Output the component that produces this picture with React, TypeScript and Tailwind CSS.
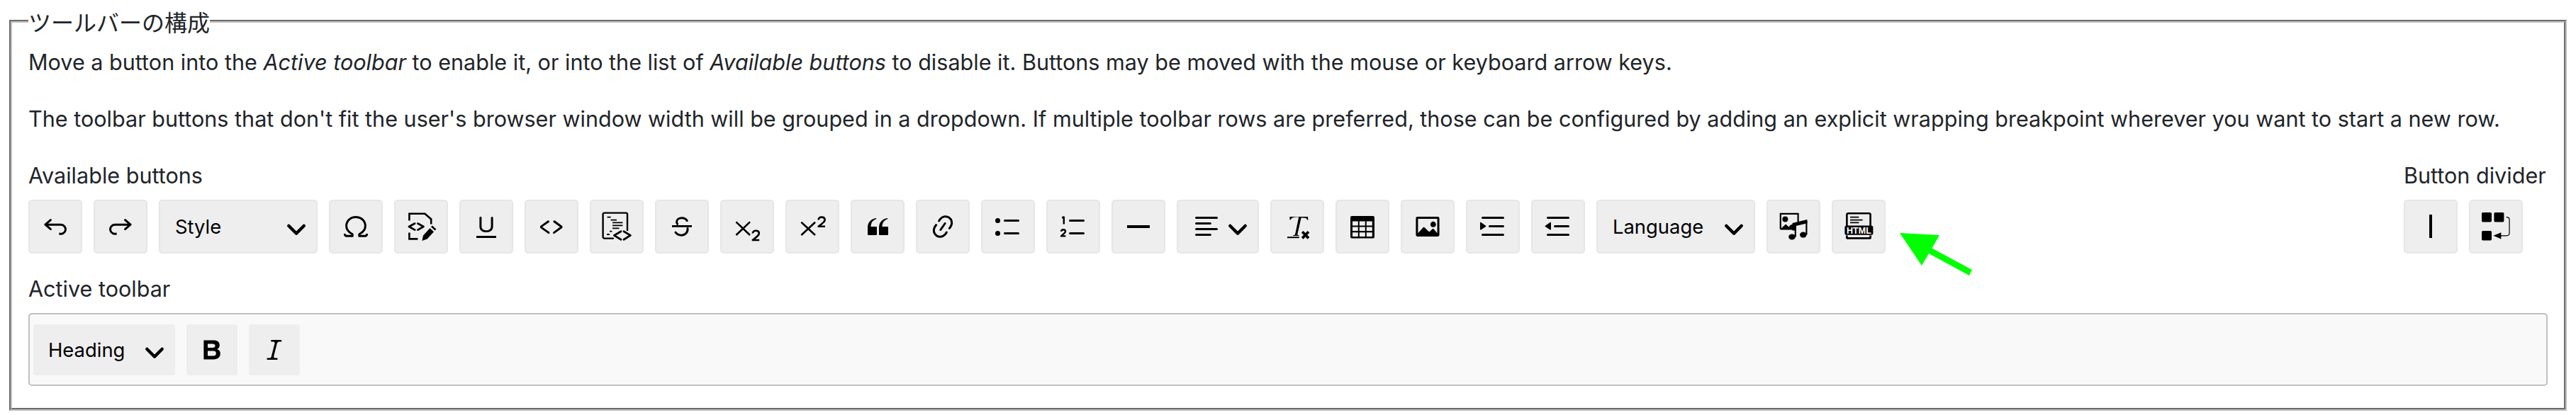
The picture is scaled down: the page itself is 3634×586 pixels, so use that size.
import React from "react";

const I = ({ children }: { children: React.ReactNode }) => (
  <svg viewBox="0 0 20 20" className="w-10 h-10 shrink-0 overflow-visible text-black" fill="currentColor">
    {children}
  </svg>
);

const S = { fill: "none", stroke: "currentColor", strokeLinecap: "round", strokeLinejoin: "round" } as const;

const Chevron = () => (
  <svg viewBox="0 0 10 10" className="w-[30px] h-[30px] shrink-0 mt-1" fill="currentColor">
    <path d="M.941 4.523a.75.75 0 1 1 1.06-1.06l3.006 3.005 3.005-3.005a.75.75 0 1 1 1.06 1.06l-3.549 3.55a.75.75 0 0 1-1.168-.136L.941 4.523z" />
  </svg>
);

const Btn = ({ children }: { children: React.ReactNode }) => (
  <div className="w-[76px] h-[76px] shrink-0 flex items-center justify-center bg-[#eeeeee] border-2 border-[#e6e6e6] rounded-[5px]">
    {children}
  </div>
);

const Drop = ({ label }: { label: string }) => (
  <div className="w-[224px] h-[76px] shrink-0 flex items-center justify-between pl-[21px] pr-[13px] bg-[#eeeeee] border-2 border-[#e6e6e6] rounded-[5px] text-[27.4px] text-black">
    <span>{label}</span>
    <Chevron />
  </div>
);

const Undo = () => <I><path d="m5.042 9.367 2.189 1.837a.75.75 0 0 1-.965 1.149l-3.788-3.18a.747.747 0 0 1-.21-.284.75.75 0 0 1 .17-.945L6.23 4.762a.75.75 0 1 1 .964 1.15L4.863 7.866h8.917A.75.75 0 0 1 14 7.9a4 4 0 1 1-1.477 7.718l.344-1.489a2.5 2.5 0 1 0 1.094-4.73l.008-.032H5.042z" /></I>;
const Redo = () => <I><path d="m14.958 9.367-2.189 1.837a.75.75 0 0 0 .965 1.149l3.788-3.18a.747.747 0 0 0 .21-.284.75.75 0 0 0-.17-.945L13.77 4.762a.75.75 0 1 0-.964 1.15l2.331 1.955H6.22A.75.75 0 0 0 6 7.9a4 4 0 1 0 1.477 7.718l-.344-1.489A2.5 2.5 0 1 1 6.039 9.4l-.008-.032h8.927z" /></I>;
const Omega = () => <I><path {...S} strokeWidth={1.5} d="M2.2 15.6c.3 1 1 1 1.6 1H7.6v-1.2C5 14 3.300 12 3.300 9.500 3.300 5.800 6.200 3.300 10 3.300s6.700 2.500 6.700 6.200c0 2.500-1.700 4.500-4.300 5.900v1.200h3.800c.6 0 1.300 0 1.600-1" /></I>;
const SourceEdit = () => (
  <I>
    <path {...S} strokeWidth={1.3} strokeLinecap="butt" strokeLinejoin="miter" d="M1.700 5.800V.9h11l4.400 3.800v3.600M1.700 14.200v4.500h6" />
    <path {...S} strokeWidth={1.4} d="M5.600 7.800 1.500 10l4.100 2.300M7.700 7.800l4 2.200-4 2.300" />
    <path d="m11.500 16.200 4.700-5.100 2.800 2.500-4.700 5.200-3.600 1.200zM17 10.300l.9-1 2.800 2.500-.9 1z" />
  </I>
);
const Underline = () => <I><path d="M3 18v-1.500h14V18zM5.200 10V3.600c0-.4.4-.6.8-.6.300 0 .7.200.7.600v6.200c0 2 1.300 2.800 3.200 2.800 1.900 0 3.400-.9 3.400-2.900V3.600c0-.3.400-.5.800-.5.300 0 .7.200.7.500V10c0 2.700-2.200 4-4.900 4-2.600 0-4.700-1.200-4.700-4z" /></I>;
const Code = () => <I><path d="m12.500 5.700 5.200 3.900v1.300l-5.600 4c-.1.200-.3.200-.5.200-.3-.1-.6-.7-.6-1l.3-.4 4.700-3.500L11.500 7l-.2-.2c-.1-.3-.1-.6 0-.8.200-.2.500-.4.800-.4a.8.8 0 0 1 .4.100zm-5.200 0L2 9.600v1.300l5.600 4c.1.200.3.200.5.200.3-.1.700-.7.600-1 0-.1 0-.3-.2-.4l-5-3.500L8.200 7l.2-.2c.1-.3.100-.6 0-.8-.2-.2-.5-.4-.8-.4a.8.8 0 0 0-.3.100z" /></I>;
const CodeBlock = () => (
  <I>
    <path {...S} strokeWidth={1.2} d="M7.500 18.300H1.300a1 1 0 0 1-1-1V1.300a1 1 0 0 1 1-1h15.200a1 1 0 0 1 1 1V12.500" />
    <path {...S} strokeWidth={0.9} strokeLinecap="butt" d="M3.300 3.300h2.500M5.800 5.300H10M7 7.200h7.200M7 9.200h7.200M7 11.200h4.700M5 13.300h1.700M3 15.500h2" />
    <path {...S} strokeWidth={1.4} d="M13 13.400 8.200 16.200 13 19.100M15 13.400l4.700 2.800L15 19.100" />
  </I>
);
const Strike = () => (
  <I>
    <path d="M3 9h14v1.400H3z" />
    <path {...S} strokeWidth={1.5} d="M13.600 5.800C12.800 4.500 11.500 3.900 10 3.900c-2 0-3.700 1-3.700 2.700 0 .7.200 1.200.5 1.600M14 11.300c.3 3-2 4.800-4.300 4.800-1.800 0-3.200-.7-4.200-2" />
  </I>
);
const Two = ({ x, y }: { x: number; y: number }) => (
  <path {...S} strokeWidth={1.3} strokeLinecap="butt" transform={`translate(${x} ${y})`} d="M.3 2C.3.8 1.300.1 2.500.1 3.800.1 4.800.8 4.800 2c0 1.300-1.500 2.400-4.500 4.700h4.700" />
);
const Sub = () => <I><path {...S} strokeWidth={1.3} strokeLinecap="butt" d="M2.200 6.700 12 16M12 6.700 2.200 16" /><Two x={13.600} y={12.800} /></I>;
const Sup = () => <I><path {...S} strokeWidth={1.3} strokeLinecap="butt" d="M2.200 6.900 12 16M12 6.900 2.200 16" /><Two x={14} y={3.200} /></I>;
const Quote = () => <I><path d="M3 10.423a6.500 6.500 0 0 1 6.056-6.408l.038.67C6.448 5.423 5.354 7.663 5.220 10H9c.552 0 .5.432.5.986v4.511c0 .554-.448.503-1 .503h-5c-.552 0-.5-.449-.5-1.003v-4.574zm8 0a6.500 6.500 0 0 1 6.056-6.408l.038.67c-2.646.739-3.740 2.979-3.873 5.315H17c.552 0 .5.432.5.986v4.511c0 .554-.448.503-1 .503h-5c-.552 0-.5-.449-.5-1.003v-4.574z" /></I>;
const Link = () => <I><path d="m11.077 15 .991-1.416a.75.75 0 1 1 1.229.86l-1.148 1.640a.748.748 0 0 1-.217.206 5.251 5.251 0 0 1-8.503-5.955.741.741 0 0 1 .12-.274l1.147-1.639a.75.75 0 1 1 1.228.86L4.933 10.700l.006.003a3.750 3.750 0 0 0 6.132 4.294l.006.004zm5.494-5.335a.748.748 0 0 1-.12.274l-1.147 1.639a.75.75 0 1 1-1.228-.86l.86-1.230a3.750 3.750 0 0 0-6.144-4.301l-.86 1.229a.75.75 0 0 1-1.229-.86l1.148-1.640a.748.748 0 0 1 .217-.206 5.251 5.251 0 0 1 8.503 5.955zm-4.563-2.532a.75.75 0 0 1 .184 1.045l-3.155 4.505a.75.75 0 1 1-1.229-.86l3.155-4.506a.75.75 0 0 1 1.045-.184z" /></I>;
const Bullets = () => <I><path d="M7 5.750c0 .414.336.75.75.75h9.500a.75.75 0 1 0 0-1.500h-9.500a.75.75 0 0 0-.75.750zm0 9c0 .414.336.75.75.75h9.500a.75.75 0 1 0 0-1.500h-9.500a.75.75 0 0 0-.75.750z" /><circle cx={2.750} cy={5.750} r={1.750} /><circle cx={2.750} cy={14.750} r={1.750} /></I>;
const Numbers = () => (
  <I>
    <path d="M7 5.750c0 .414.336.75.75.75h9.500a.75.75 0 1 0 0-1.500h-9.500a.75.75 0 0 0-.75.750zm0 9c0 .414.336.75.75.75h9.500a.75.75 0 1 0 0-1.500h-9.500a.75.75 0 0 0-.75.750z" />
    <path {...S} strokeWidth={1.2} strokeLinecap="butt" d="M2.100 3.800 3.400 3.200v5.100M1.500 13.400c.1-.9.700-1.300 1.500-1.300s1.500.4 1.500 1.300c0 1-1.500 1.800-3 3.300h3.200" />
  </I>
);
const Hr = () => <I><path d="M2 9h16v2H2z" /></I>;
const Align = () => <I><path d="M2 3.750c0 .414.336.75.75.75h14.500a.75.75 0 1 0 0-1.500H2.750a.75.75 0 0 0-.75.750zm0 8c0 .414.336.75.75.75h14.500a.75.75 0 1 0 0-1.500H2.750a.75.75 0 0 0-.75.750zm0 4c0 .414.336.75.75.75h9.929a.75.75 0 1 0 0-1.500H2.750a.75.75 0 0 0-.75.750zm0-8c0 .414.336.75.75.75h9.929a.75.75 0 1 0 0-1.500H2.750a.75.75 0 0 0-.75.750z" /></I>;
const Clear = () => (
  <I>
    <path d="M4.700 3h12.800l.2 2.300-.5.100c-.5-1.200-1.200-1.600-2.800-1.600h-1.600l-2.600 11.400c-.1.600.2.800 1 .8v.5H7.100v-.5c1 0 1.300-.2 1.500-.9l2.500-11.800H9.400c-2 0-3.300.5-4.200 1.900l-.5-.1z" />
    <path d="M3 17.100h8.400v1H3z" />
    <path {...S} strokeWidth={1.900} strokeLinecap="butt" d="m13.600 13.600 4.400 4.600M18 13.600l-4.400 4.600" />
  </I>
);
const Table = () => <I><path fillRule="evenodd" d="M2.500 2.500h15a1 1 0 0 1 1 1v13.800a1 1 0 0 1-1 1h-15a1 1 0 0 1-1-1V3.500a1 1 0 0 1 1-1zM3 6.300v2.900h3.900V6.300zm4.900 0v2.900h4V6.300zm5 0v2.900h4V6.300zM3 10.300V13h3.900v-2.700zm4.900 0V13h4v-2.700zm5 0V13h4v-2.700zM3 14.100v2.900h3.900v-2.900zm4.900 0v2.900h4v-2.900zm5 0v2.900h4v-2.900z" /></I>;
const Picture = () => <I><path d="M6.910 10.540c.26-.23.64-.21.88.03l3.360 3.140 2.230-2.060a.64.64 0 0 1 .87 0l2.520 2.970V4.500H3.200v10.120l3.710-4.080zm10.270-7.510c.6 0 1.090.47 1.090 1.050v11.840c0 .59-.49 1.060-1.090 1.060H2.790c-.6 0-1.090-.47-1.090-1.060V4.080c0-.58.49-1.050 1.100-1.050h14.380zm-5.220 5.560a1.960 1.960 0 1 1 3.900-.01 1.960 1.960 0 0 1-3.900.01z" /></I>;
const Indent = () => <I><path d="M2 3.750c0 .414.336.75.75.75h14.500a.75.75 0 1 0 0-1.500H2.750a.75.75 0 0 0-.75.750zm5 6c0 .414.336.75.75.75h9.500a.75.75 0 1 0 0-1.500h-9.500a.75.75 0 0 0-.75.750zM2.750 16.500h14.500a.75.75 0 1 0 0-1.500H2.750a.75.75 0 1 0 0 1.500zM1.632 6.950 5.020 9.358a.4.4 0 0 1-.013.661l-3.390 2.207A.4.4 0 0 1 1 11.892V7.275a.4.4 0 0 1 .632-.326z" /></I>;
const Outdent = () => <I><path d="M2 3.750c0 .414.336.75.75.75h14.500a.75.75 0 1 0 0-1.500H2.750a.75.75 0 0 0-.75.750zm5 6c0 .414.336.75.75.75h9.500a.75.75 0 1 0 0-1.500h-9.500a.75.75 0 0 0-.75.750zM2.750 16.500h14.500a.75.75 0 1 0 0-1.500H2.750a.75.75 0 1 0 0 1.500zM4.368 6.950.980 9.358a.4.4 0 0 0 .013.661l3.390 2.207A.4.4 0 0 0 5 11.892V7.275a.4.4 0 0 0-.632-.326z" /></I>;
const Media = () => (
  <I>
    <path {...S} strokeWidth={1.100} strokeLinecap="butt" strokeLinejoin="miter" d="M.9 11.800V.9h12.400v6" />
    <path d="M.6 12.300h8.900l.7-4.300-2.500 1-1 1.300L4.600 8.200 1.200 11.400z" />
    <circle cx={4.200} cy={4.700} r={2} />
    <path d="M9.300 7.500 19.700 5v2.600L11.900 9.500v3.200H9.300z" />
    <path {...S} strokeWidth={1.100} strokeLinecap="butt" d="M11.400 8.500v8.700M19.200 6v9.800" />
    <ellipse cx={9} cy={17.200} rx={2.400} ry={2} />
    <ellipse cx={16.900} cy={15.800} rx={2.400} ry={2} />
  </I>
);
const Html = () => (
  <I>
    <path {...S} strokeWidth={1.300} strokeLinecap="butt" d="M1.700 9.600V1.600a1 1 0 0 1 1-1h14.600a1 1 0 0 1 1 1v8" />
    <path {...S} strokeWidth={1.400} strokeLinecap="butt" d="M1.700 16.200v1.400a.6.6 0 0 0 .6.6h15.400a.6.6 0 0 0 .6-.6v-1.400" />
    <path {...S} strokeWidth={0.9} strokeLinecap="butt" d="M4 3.300h6.200M4 5.300h8.800M4 7.200h6.200" />
    <rect x={0.2} y={9.200} width={20} height={6.700} rx={1.300} />
    <text x={10.200} y={15} textAnchor="middle" fill="#ffffff" fontSize={6.800} fontWeight={700} textLength={17.400} lengthAdjust="spacingAndGlyphs" fontFamily="'Liberation Sans', sans-serif">HTML</text>
  </I>
);
const Bar = () => <I><path d="M9 1.500h2v16.500H9z" /></I>;
const PageBreak = () => (
  <I>
    <rect x={0} y={0} width={7} height={6.700} rx={0.8} />
    <rect x={8.700} y={0} width={7} height={6.700} rx={0.8} />
    <rect x={0} y={13} width={7} height={6.700} rx={0.8} />
    <path {...S} strokeWidth={0.6} d="M17.500 3.300c1.300 0 2 .7 2 1.800v9.400c0 1.100-.7 1.900-2 1.900h-5" />
    <path d="m8.200 16.400 5.500-2.300v4.600z" />
  </I>
);
const Bold = () => <I><path fillRule="evenodd" d="M4.200 3.300h6.900c2.800 0 4.300 1.300 4.300 3.400 0 1.300-.7 2.300-1.800 2.800 1.500.4 2.300 1.600 2.300 3.100 0 2.500-1.800 4.100-4.700 4.100h-7zM7 5.700v2.800h3.400c1.200 0 1.900-.5 1.900-1.400s-.7-1.400-1.900-1.400zm0 5.100v3.500h3.900c1.300 0 2-.6 2-1.800s-.7-1.700-2-1.700z" /></I>;
const Italic = () => <I><path d="m9.586 14.633.021.004c-.036.335.095.655.393.962.082.083.173.15.274.201h1.474a.6.6 0 1 1 0 1.200H5.304a.6.6 0 0 1 0-1.200h1.150c.474-.07.809-.182 1.005-.334.157-.122.291-.32.404-.597l2.416-9.550a1.053 1.053 0 0 0-.281-.823 1.120 1.120 0 0 0-.442-.296H8.150a.6.6 0 0 1 0-1.200h6.443a.6.6 0 1 1 0 1.200h-1.195c-.376.056-.65.155-.823.296-.215.175-.423.439-.623.79l-2.366 9.347z" /></I>;

export default function App() {
  return (
    <div className="relative bg-white h-[586px] font-['Inter','Liberation_Sans','Noto_Sans_CJK_JP',sans-serif] text-[30.57px] leading-[48px] text-[#212529]">
      <fieldset className="mx-[13px] pt-[10px] px-[23px] pb-[31px] border-4 [border-style:groove] border-[#c0c0c0] relative top-[6px]">
        <legend className="text-[32px] leading-[48px] font-['Noto_Sans_CJK_JP','Inter',sans-serif]">ツールバーの構成</legend>
        <p>Move a button into the <em>Active toolbar</em> to enable it, or into the list of <em>Available buttons</em> to disable it. Buttons may be moved with the mouse or keyboard arrow keys.</p>
        <p className="mt-8">The toolbar buttons that don't fit the user's browser window width will be grouped in a dropdown. If multiple toolbar rows are preferred, those can be configured by adding an explicit wrapping breakpoint wherever you want to start a new row.</p>
        <div className="mt-8 flex justify-between">
          <div>
            <div className="mb-[10px]">Available buttons</div>
            <div className="flex gap-4">
              <Btn><Undo /></Btn>
              <Btn><Redo /></Btn>
              <Drop label="Style" />
              <Btn><Omega /></Btn>
              <Btn><SourceEdit /></Btn>
              <Btn><Underline /></Btn>
              <Btn><Code /></Btn>
              <Btn><CodeBlock /></Btn>
              <Btn><Strike /></Btn>
              <Btn><Sub /></Btn>
              <Btn><Sup /></Btn>
              <Btn><Quote /></Btn>
              <Btn><Link /></Btn>
              <Btn><Bullets /></Btn>
              <Btn><Numbers /></Btn>
              <Btn><Hr /></Btn>
              <div className="w-[116px] h-[76px] shrink-0 flex items-center gap-[9px] pl-5 bg-[#eeeeee] border-2 border-[#e6e6e6] rounded-[5px] text-black">
                <Align />
                <Chevron />
              </div>
              <Btn><Clear /></Btn>
              <Btn><Table /></Btn>
              <Btn><Picture /></Btn>
              <Btn><Indent /></Btn>
              <Btn><Outdent /></Btn>
              <Drop label="Language" />
              <Btn><Media /></Btn>
              <Btn><Html /></Btn>
            </div>
          </div>
          <div className="w-[203px] shrink-0">
            <div className="mb-[10px] whitespace-nowrap">Button divider</div>
            <div className="flex gap-4">
              <Btn><Bar /></Btn>
              <Btn><PageBreak /></Btn>
            </div>
          </div>
        </div>
        <div className="mt-[26px] mb-[10px]">Active toolbar</div>
        <div className="h-[103px] flex items-center gap-4 pl-[5px] bg-[#f9f9f9] border-2 border-[#c0c0c0] rounded-[5px]">
          <div className="w-[200px] h-[72px] flex items-center justify-between pl-[21px] pr-[14px] bg-[#eeeeee] rounded-[4px] text-[27.4px] text-black">
            <span>Heading</span>
            <Chevron />
          </div>
          <div className="w-[72px] h-[72px] flex items-center justify-center bg-[#eeeeee] rounded-[4px]"><Bold /></div>
          <div className="w-[72px] h-[72px] flex items-center justify-center bg-[#eeeeee] rounded-[4px]"><Italic /></div>
        </div>
      </fieldset>
      <svg className="absolute left-[2670px] top-[320px] w-[120px] h-[80px]" viewBox="2670 320 120 80" fill="#00ff00">
        <path d="M2680 329 2736 332 2725.500 350.500 2782 381 2778 389 2721 358 2711 375z" />
      </svg>
    </div>
  );
}
